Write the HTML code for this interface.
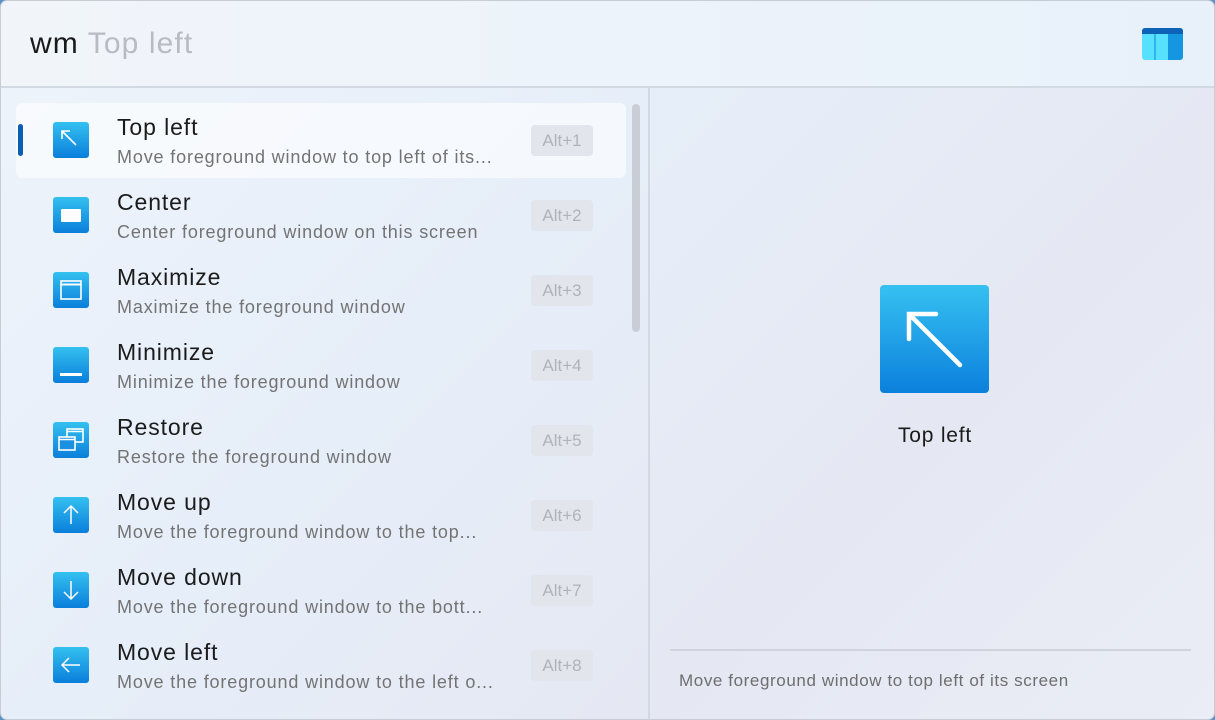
<!DOCTYPE html>
<html><head><style>
*{margin:0;padding:0;box-sizing:border-box}
body{width:1215px;height:720px;overflow:hidden;background:#5b8fc7;font-family:"Liberation Sans",sans-serif;position:relative}
.win{position:absolute;left:0;top:0;width:1215px;height:720px;border:1px solid #c8ccd4;border-radius:7px;background:linear-gradient(135deg,#eef4fb 0%,#e6eef9 40%,#e5e8f3 70%,#eaedf5 100%);overflow:hidden}
.hdr{position:absolute;left:0;top:0;width:100%;height:87px;border-bottom:2px solid #d3d9e2;background:linear-gradient(90deg,#f1f5fa,#e8f1fa)}
.q{position:absolute;left:29px;top:26px;font-size:30px;color:#1a1a1a;letter-spacing:1.1px}
.q span{color:#b8bcc2}
.logo{position:absolute;left:1141px;top:27px;width:41px;height:32px;border-radius:3px;overflow:hidden;background:#58e1ff}
.left{position:absolute;left:0;top:87px;width:649px;bottom:0;border-right:2px solid #d3d9e2}
.row{position:absolute;left:15px;width:610px;height:75px;border-radius:6px}
.row.sel{background:rgba(255,255,255,.6)}
.bar{position:absolute;left:2px;top:21px;width:5px;height:32px;border-radius:3px;background:#0a5fb4}
.ic{position:absolute;left:37px;top:19px;width:36px;height:36px;border-radius:3px;background:linear-gradient(180deg,#34c0f0,#0a7fdb)}
.ic svg{position:absolute;left:0;top:0}
.t{position:absolute;left:101px;top:11px;font-size:23px;color:#1b1b1b;letter-spacing:0.9px}
.d{position:absolute;left:101px;top:44px;font-size:18px;color:#737373;white-space:nowrap;letter-spacing:0.85px}
.k{position:absolute;left:515px;top:22px;width:62px;height:31px;border-radius:4px;background:#e2e5ec;color:#b0b3b9;font-size:17px;text-align:center;line-height:31px}
.sb{position:absolute;left:631px;top:16px;width:8px;height:228px;border-radius:4px;background:#c9ced6}
.big{position:absolute;left:879px;top:284px;width:109px;height:108px;border-radius:4px;background:linear-gradient(180deg,#36c1f1,#0b80dc)}
.bt{position:absolute;left:834px;top:423px;width:200px;text-align:center;font-size:21px;color:#1b1b1b;letter-spacing:0.8px}
.line{position:absolute;left:669px;top:648px;width:521px;height:2px;background:#cfd4dc}
.ft{position:absolute;left:678px;top:670px;font-size:17px;color:#6e6e6e;letter-spacing:0.6px}
</style></head><body><div class="win">
<div class="hdr"><div class="q">wm <span>Top left</span></div>
<div class="logo"><div style="position:absolute;left:0;top:0;width:41px;height:6px;background:#0c63b7"></div><div style="position:absolute;left:26px;top:6px;width:15px;height:26px;background:#1596e0"></div><div style="position:absolute;left:12px;top:6px;width:2px;height:26px;background:#2fb5ea"></div></div></div>
<div class="left">
<div class="sb"></div>
<div class="row sel" style="top:15px"><div class="bar"></div><div class="ic"><svg width="36" height="36"><path d="M9 17V9h8M9 9l14 14" stroke="#fff" stroke-width="1.6" fill="none"/></svg></div><div class="t">Top left</div><div class="d">Move foreground window to top left of its...</div><div class="k">Alt+1</div></div>
<div class="row" style="top:90px"><div class="ic"><svg width="36" height="36"><rect x="8" y="12" width="20" height="13" rx="1" fill="#fff"/></svg></div><div class="t">Center</div><div class="d">Center foreground window on this screen</div><div class="k">Alt+2</div></div>
<div class="row" style="top:165px"><div class="ic"><svg width="36" height="36"><rect x="8" y="9" width="20" height="18" fill="none" stroke="#fff" stroke-width="1.6"/><path d="M8 12.5h20" stroke="#fff" stroke-width="2"/></svg></div><div class="t">Maximize</div><div class="d">Maximize the foreground window</div><div class="k">Alt+3</div></div>
<div class="row" style="top:240px"><div class="ic"><svg width="36" height="36"><rect x="7" y="26" width="22" height="3" fill="#fff"/></svg></div><div class="t">Minimize</div><div class="d">Minimize the foreground window</div><div class="k">Alt+4</div></div>
<div class="row" style="top:315px"><div class="ic"><svg width="36" height="36"><rect x="14" y="7" width="16" height="13" fill="none" stroke="#fff" stroke-width="1.6"/><rect x="6" y="15" width="16" height="13" fill="#1a90e0" stroke="#fff" stroke-width="1.6"/><path d="M14 9.5h16M6 17.5h16" stroke="#fff" stroke-width="1.6"/></svg></div><div class="t">Restore</div><div class="d">Restore the foreground window</div><div class="k">Alt+5</div></div>
<div class="row" style="top:390px"><div class="ic"><svg width="36" height="36"><path d="M18 27V9M11 16l7-7 7 7" stroke="#fff" stroke-width="1.5" fill="none"/></svg></div><div class="t">Move up</div><div class="d">Move the foreground window to the top...</div><div class="k">Alt+6</div></div>
<div class="row" style="top:465px"><div class="ic"><svg width="36" height="36"><path d="M18 9v18M11 20l7 7 7-7" stroke="#fff" stroke-width="1.5" fill="none"/></svg></div><div class="t">Move down</div><div class="d">Move the foreground window to the bott...</div><div class="k">Alt+7</div></div>
<div class="row" style="top:540px"><div class="ic"><svg width="36" height="36"><path d="M27 18H9M16 11l-7 7 7 7" stroke="#fff" stroke-width="1.5" fill="none"/></svg></div><div class="t">Move left</div><div class="d">Move the foreground window to the left o...</div><div class="k">Alt+8</div></div>
</div>
<div class="big"><svg width="109" height="108"><path d="M29 54V29h27M29 29l51 51" stroke="#fff" stroke-width="4.5" stroke-linecap="round" fill="none"/></svg></div>
<div class="bt">Top left</div>
<div class="line"></div>
<div class="ft">Move foreground window to top left of its screen</div>
</div></body></html>
